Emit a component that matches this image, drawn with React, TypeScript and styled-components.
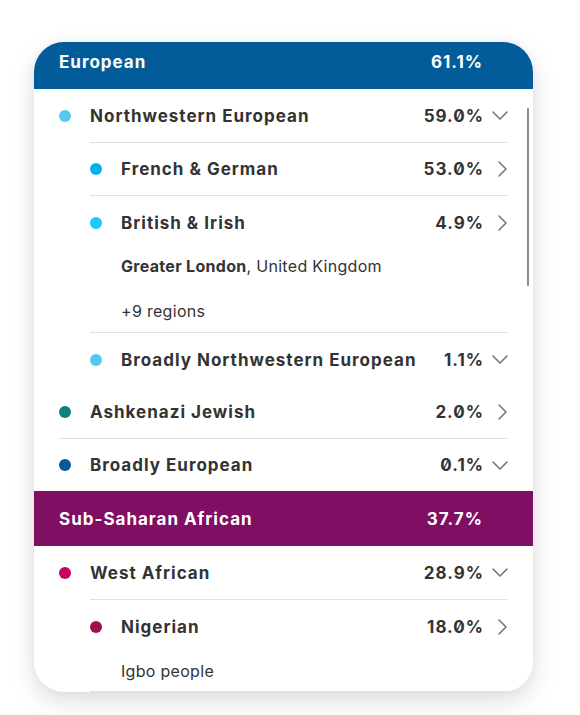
import React from "react";
import styled, { createGlobalStyle } from "styled-components";

const GlobalStyle = createGlobalStyle`
  html, body {
    margin: 0;
    padding: 0;
    background: #ffffff;
  }
  body {
    font-family: Inter, "Noto Sans", "Liberation Sans", sans-serif;
    color: #333333;
    -webkit-font-smoothing: antialiased;
  }
`;

const Page = styled.div`
  padding: 42px 0 0 34px;
  width: 580px;
  height: 715px;
  box-sizing: border-box;
`;

const Card = styled.div`
  position: relative;
  width: 499px;
  height: 650px;
  border-radius: 30px;
  overflow: hidden;
  background: #ffffff;
  box-shadow: 0 10px 26px rgba(0, 0, 0, 0.13), 0 0 10px rgba(0, 0, 0, 0.05);
`;

const Scroller = styled.div`
  display: flex;
  flex-direction: column;
`;

const ScrollThumb = styled.div`
  position: absolute;
  right: 4px;
  top: 66px;
  width: 2px;
  height: 178px;
  background: #8a8a8a;
  border-radius: 1px;
`;

const RegionHeader = styled.div<{ $color: string; $height: number; $padBottom: number }>`
  display: flex;
  align-items: center;
  justify-content: space-between;
  height: ${(p) => p.$height}px;
  padding: 0 50px ${(p) => p.$padBottom}px 25px;
  box-sizing: border-box;
  background: ${(p) => p.$color};
  color: #ffffff;
  font-weight: 700;
  font-size: 17px;
  letter-spacing: 1px;
  font-feature-settings: "zero" 1;
`;

const Row = styled.div<{ $indent: number; $height: number; $divider: boolean }>`
  display: flex;
  align-items: center;
  height: ${(p) => p.$height}px;
  margin: 0 25px 0 ${(p) => p.$indent}px;
  box-sizing: border-box;
  border-top: ${(p) => (p.$divider ? "1px solid #e1e1e1" : "none")};
`;

const Dot = styled.span<{ $color: string }>`
  flex: none;
  width: 12px;
  height: 12px;
  border-radius: 50%;
  background: ${(p) => p.$color};
  margin-right: 19px;
`;

const Label = styled.span`
  flex: 1;
  font-weight: 700;
  font-size: 17px;
  letter-spacing: 1px;
  color: #333333;
  white-space: nowrap;
`;

const Pct = styled.span`
  font-weight: 700;
  font-size: 17px;
  letter-spacing: 1px;
  color: #333333;
  font-feature-settings: "zero" 1;
`;

const ChevronBox = styled.span`
  flex: none;
  width: 24px;
  display: flex;
  justify-content: flex-end;
  align-items: center;
  color: #777777;
`;

const Details = styled.div<{ $gap: number; $padTop: number; $padBottom: number; $bottomRule?: boolean }>`
  display: flex;
  flex-direction: column;
  gap: ${(p) => p.$gap}px;
  margin: 0 25px 0 56px;
  padding: ${(p) => p.$padTop}px 0 ${(p) => p.$padBottom}px 31px;
  border-bottom: ${(p) => (p.$bottomRule ? "1px solid #e1e1e1" : "none")};
`;

const DetailLine = styled.div`
  height: 20px;
  line-height: 20px;
  font-size: 16px;
  letter-spacing: 0.3px;
  font-weight: 400;
  color: #333333;
  white-space: nowrap;
  b {
    font-weight: 700;
  }
`;

const ChevronDown = () => (
  <svg width="16" height="9" viewBox="0 0 16 9" fill="none">
    <path d="M1 1l7 7 7-7" stroke="currentColor" strokeWidth="1.6" strokeLinecap="round" strokeLinejoin="round" />
  </svg>
);

const ChevronRight = () => (
  <svg width="11" height="16" viewBox="0 0 11 16" fill="none">
    <path d="M2 1l7 7-7 7" stroke="currentColor" strokeWidth="1.6" strokeLinecap="round" strokeLinejoin="round" />
  </svg>
);

type EthProps = {
  level: 0 | 1;
  label: string;
  pct: string;
  color: string;
  dir: "down" | "right";
  height: number;
  divider?: boolean;
};

const Ethnicity = ({ level, label, pct, color, dir, height, divider = false }: EthProps) => (
  <Row $indent={level === 0 ? 25 : 56} $height={height} $divider={divider}>
    <Dot $color={color} />
    <Label>{label}</Label>
    <Pct>{pct}</Pct>
    <ChevronBox>{dir === "down" ? <ChevronDown /> : <ChevronRight />}</ChevronBox>
  </Row>
);

export default function App() {
  return (
    <>
      <GlobalStyle />
      <Page>
        <Card>
          <Scroller>
            <RegionHeader $color="#035c9a" $height={47} $padBottom={7}>
              <span>European</span>
              <span>61.1%</span>
            </RegionHeader>
            <Ethnicity level={0} label="Northwestern European" pct="59.0%" color="#57c9ee" dir="down" height={53} />
            <Ethnicity level={1} label="French & German" pct="53.0%" color="#00b1ec" dir="right" height={53} divider />
            <Ethnicity level={1} label="British & Irish" pct="4.9%" color="#1ec8fd" dir="right" height={54} divider />
            <Details $gap={25} $padTop={7} $padBottom={11}>
              <DetailLine>
                <b>Greater London</b>, United Kingdom
              </DetailLine>
              <DetailLine>+9 regions</DetailLine>
            </Details>
            <Ethnicity level={1} label="Broadly Northwestern European" pct="1.1%" color="#57c9ee" dir="down" height={54} divider />
            <Ethnicity level={0} label="Ashkenazi Jewish" pct="2.0%" color="#10817a" dir="right" height={52} />
            <Ethnicity level={0} label="Broadly European" pct="0.1%" color="#035c9a" dir="down" height={53} divider />
            <RegionHeader $color="#800e62" $height={55} $padBottom={0}>
              <span>Sub-Saharan African</span>
              <span>37.7%</span>
            </RegionHeader>
            <Ethnicity level={0} label="West African" pct="28.9%" color="#c8005f" dir="down" height={53} />
            <Ethnicity level={1} label="Nigerian" pct="18.0%" color="#a0104e" dir="right" height={54} divider />
            <Details $gap={0} $padTop={8} $padBottom={10} $bottomRule>
              <DetailLine>Igbo people</DetailLine>
            </Details>
          </Scroller>
          <ScrollThumb />
        </Card>
      </Page>
    </>
  );
}
